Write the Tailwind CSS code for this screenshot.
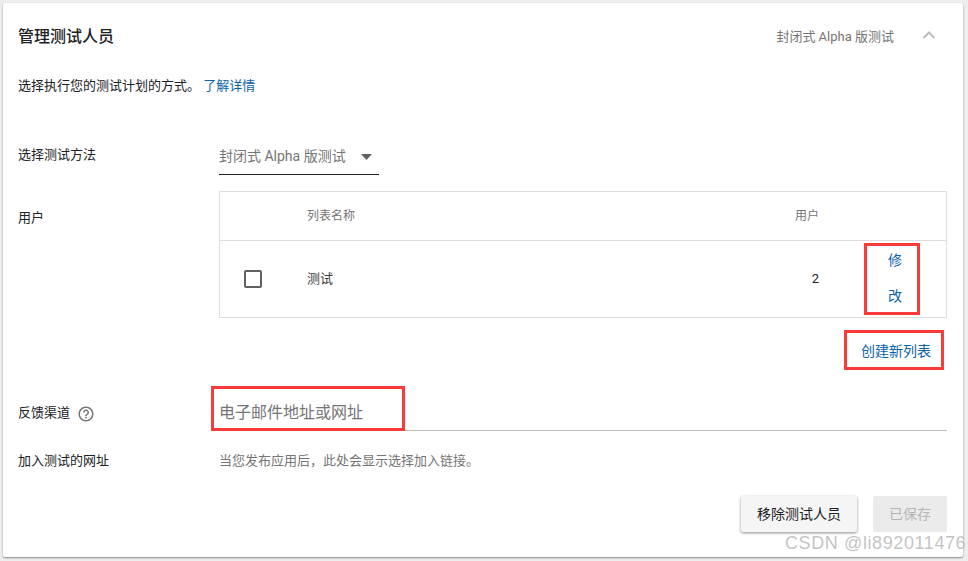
<!DOCTYPE html>
<html lang="zh-CN">
<head>
    <meta charset="UTF-8">
    <title>管理测试人员</title>
    <script src="https://cdn.jsdelivr.net/npm/@tailwindcss/browser@4"></script>
</head>
<body class="bg-[#eeeeee] w-[968px] h-[561px] overflow-hidden relative font-['Roboto','Noto_Sans_CJK_SC',sans-serif] text-[13px] text-[#202124]">
    <div class="absolute left-[3px] top-[3px] w-[960px] h-[554px] bg-white rounded-[2px] shadow-[0_1px_2px_rgba(0,0,0,0.45)] pl-[15px] pr-[16px] flex flex-col">
        <!-- 标题 -->
        <div class="h-[33px] mt-[17px] flex items-center">
            <h2 class="text-[16px] font-medium flex-1 leading-[33px]">管理测试人员</h2>
            <span class="text-[#757575] mr-[27px]">封闭式 Alpha 版测试</span>
            <svg class="mr-[10px] mb-[3px]" width="16" height="10" viewBox="0 0 16 10"><path d="M2.5 8 L8 2.5 L13.5 8" fill="none" stroke="#bdbdbd" stroke-width="2"/></svg>
        </div>
        <p class="mt-[24px] h-[18px] leading-[18px]">选择执行您的测试计划的方式。 <a class="text-[#0b63a8]">了解详情</a></p>

        <!-- 选择测试方法 -->
        <div class="flex mt-[51px]">
            <label class="w-[201px] leading-[18px]">选择测试方法</label>
            <div class="w-[160px] h-[29px] border-b border-[#202124] flex items-start pt-[1px] text-[14px] text-[#757575]">
                <span class="leading-[18px]">封闭式 Alpha 版测试</span>
                <svg class="ml-[15px] mt-[7px]" width="11" height="6" viewBox="0 0 11 6"><path d="M0 0 H11 L5.5 6 Z" fill="#616161"/></svg>
            </div>
        </div>

        <!-- 用户 -->
        <div class="flex mt-[16px]">
            <label class="w-[201px] pt-[18px] leading-[18px]">用户</label>
            <div class="flex-1">
                <div class="border border-[#dedede] h-[127px]">
                    <div class="h-[49px] border-b border-[#dedede] flex items-center text-[12px] text-[#757575]">
                        <span class="ml-[87px] flex-1">列表名称</span>
                        <span class="mr-[127px]">用户</span>
                    </div>
                    <div class="h-[76px] flex items-center">
                        <span class="ml-[24px] w-[18px] h-[18px] border-2 border-[#616161] rounded-[2px]"></span>
                        <span class="ml-[45px] flex-1 text-[#3c4043]">测试</span>
                        <span class="mr-[50px]">2</span>
                        <div class="w-[52px] mr-[25px] mb-[2px] flex flex-col items-center text-[14px] text-[#0b63a8] leading-[18px] gap-[18px]">
                            <a>修</a>
                            <a>改</a>
                        </div>
                    </div>
                </div>
                <div class="flex justify-end mt-[24px] mr-[16px]">
                    <a class="text-[14px] text-[#0b63a8] leading-[18px]">创建新列表</a>
                </div>
            </div>
        </div>

        <!-- 反馈渠道 -->
        <div class="flex mt-[27px]">
            <label class="w-[201px] flex items-center h-[18px] mt-[17px]">反馈渠道
                <svg class="ml-[7px] mt-[2px]" width="18" height="18" viewBox="0 0 24 24" fill="#757575"><path d="M11 18h2v-2h-2v2zm1-16C6.48 2 2 6.48 2 12s4.48 10 10 10 10-4.48 10-10S17.52 2 12 2zm0 18c-4.41 0-8-3.59-8-8s3.59-8 8-8 8 3.59 8 8-3.59 8-8 8zm0-14c-2.21 0-4 1.79-4 4h2c0-1.1.9-2 2-2s2 .9 2 2c0 2-3 1.75-3 5h2c0-2.25 3-2.5 3-5 0-2.21-1.79-4-4-4z"/></svg>
            </label>
            <div class="flex-1 h-[44px] border-b border-[#bdbdbd] text-[16px] text-[#757575] pt-[16px] leading-[20px]">电子邮件地址或网址</div>
        </div>

        <!-- 加入测试的网址 -->
        <div class="flex mt-[21px]">
            <label class="w-[201px] leading-[18px]">加入测试的网址</label>
            <span class="text-[13px] text-[#757575] leading-[18px]">当您发布应用后，此处会显示选择加入链接。</span>
        </div>

        <!-- 按钮 -->
        <div class="flex justify-end mt-[26px] gap-[16px] text-[14px]">
            <button class="w-[116px] h-[36px] bg-[#f5f5f5] rounded-[2px] shadow-[0_1px_3px_rgba(0,0,0,0.45)] text-[#202124]">移除测试人员</button>
            <button class="w-[74px] h-[36px] bg-[#ebebeb] rounded-[2px] text-[#b5b5b5]">已保存</button>
        </div>
    </div>

    <!-- 红框标注 -->
    <div class="absolute left-[864px] top-[243px] w-[56px] h-[72px] border-[3px] border-[#fb3a3a]"></div>
    <div class="absolute left-[844px] top-[330px] w-[100px] h-[40px] border-[3px] border-[#fb3a3a]"></div>
    <div class="absolute left-[211px] top-[386px] w-[194px] h-[45px] border-[3px] border-[#fb3a3a]"></div>

    <!-- 水印 -->
    <span class="absolute left-[785px] top-[532px] text-[18px] leading-[22px] tracking-[0.6px] text-[#b4b4b4]/80 whitespace-nowrap font-['Liberation_Sans',sans-serif]">CSDN @li892011476</span>
</body>
</html>
